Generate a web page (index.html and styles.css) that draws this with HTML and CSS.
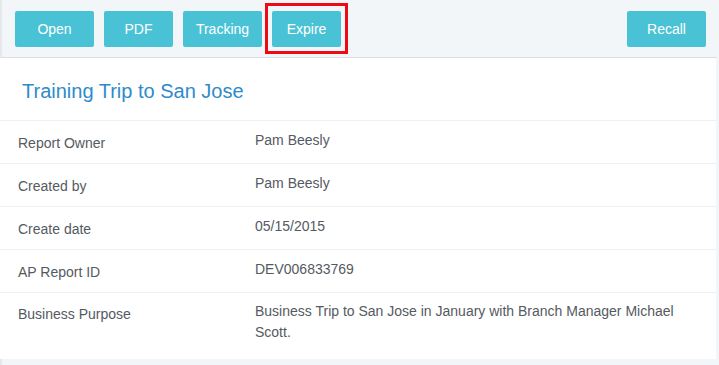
FILE: index.html
```html
<!DOCTYPE html>
<html lang="en">
<head>
    <meta charset="UTF-8">
    <meta name="viewport" content="width=device-width, initial-scale=1.0">
    <title>Training Trip to San Jose</title>
    <link rel="stylesheet" href="styles.css">
</head>
<body>
    <div class="page">
        <!-- toolbar -->
        <div class="toolbar">
            <div class="btns">
                <button class="btn btn-wide">Open</button>
                <button class="btn">PDF</button>
                <button class="btn btn-wide">Tracking</button>
                <span class="mark"><button class="btn">Expire</button></span>
            </div>
            <button class="btn btn-wide">Recall</button>
        </div>

        <!-- report -->
        <div class="card">
            <h2 class="title">Training Trip to San Jose</h2>
            <div class="row">
                <div class="label">Report Owner</div>
                <div class="value">Pam Beesly</div>
            </div>
            <div class="row">
                <div class="label">Created by</div>
                <div class="value">Pam Beesly</div>
            </div>
            <div class="row">
                <div class="label">Create date</div>
                <div class="value">05/15/2015</div>
            </div>
            <div class="row">
                <div class="label">AP Report ID</div>
                <div class="value">DEV006833769</div>
            </div>
            <div class="row row-last">
                <div class="label">Business Purpose</div>
                <div class="value">Business Trip to San Jose in January with Branch Manager Michael Scott.</div>
            </div>
        </div>
        <div class="foot"></div>
    </div>
</body>
</html>
```

FILE: styles.css
```css
*{
    margin:0;
    padding:0;
    box-sizing:border-box;
}
body{
    background:#f3f6f8;
    font-family:"Liberation Sans", Arial, sans-serif;
    font-size:14px;
    color:#555a5f;
}
.page{
    width:719px;
    height:365px;
    overflow:hidden;
}
.toolbar{
    width:717px;
    height:58px;
    display:flex;
    justify-content:space-between;
    align-items:flex-start;
    padding:11px 11px 0 13px;
    background:#f3f6f8;
    border-left:2px solid #e5e9ec;
    border-bottom:1px solid #d9dee2;
}
.btns{
    display:flex;
    gap:10px;
}
.btn{
    width:69px;
    height:36px;
    border:none;
    border-radius:2px;
    background:#4ac2d6;
    color:#fff;
    font-family:"Liberation Sans", Arial, sans-serif;
    font-size:14px;
    display:block;
}
.btn-wide{
    width:79px;
}
.mark{
    position:relative;
    display:block;
}
/* red highlight box */
.mark::after{
    content:"";
    position:absolute;
    left:-7px;
    right:-7px;
    top:-8px;
    bottom:-7px;
    border:3px solid #ee0a14;
}
.card{
    width:716px;
    height:301px;
    background:#fff;
}
.title{
    height:63px;
    padding:21px 0 0 22px;
    font-size:20px;
    line-height:24px;
    font-weight:normal;
    color:#2e8bcb;
    border-bottom:1px solid #eef0f2;
}
.row{
    display:grid;
    grid-template-columns:255px 1fr;
    height:43px;
    border-bottom:1px solid #eef0f2;
    line-height:20px;
}
.label{
    padding:12px 0 0 18px;
}
.value{
    padding:9px 12px 0 0;
}
.row-last{
    height:auto;
    border-bottom:none;
}
.row-last .label{
    padding-top:11px;
}
.row-last .value{
    padding-top:8px;
    line-height:21px;
}
.foot{
    height:6px;
    border-left:2px solid #e5e9ec;
}
```
